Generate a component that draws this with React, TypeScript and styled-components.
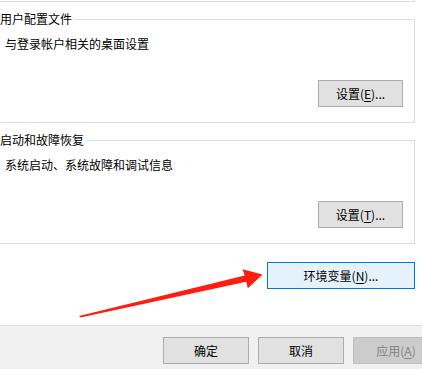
import React from "react";
import styled, { createGlobalStyle } from "styled-components";

const Global = createGlobalStyle`
  html, body { margin: 0; padding: 0; background: #ffffff; }
  body { width: 422px; height: 369px; overflow: hidden; }
  * { box-sizing: border-box; }
`;

const Page = styled.div`
  position: relative;
  width: 422px;
  height: 369px;
  overflow: hidden;
  display: flex;
  flex-direction: column;
  font-family: "Noto Sans CJK SC", "Microsoft YaHei", sans-serif;
  font-size: 12px;
  color: #000000;
`;

const Content = styled.div`
  flex: 0 0 325px;
  background: #ffffff;
  display: flex;
  flex-direction: column;
`;

const PrevBox = styled.div`
  margin-left: -10px;
  width: 425px;
  height: 2px;
  border-right: 1px solid #dcdcdc;
  border-bottom: 1px solid #dcdcdc;
`;

const Group = styled.section<{ $top: number }>`
  margin-top: ${(p) => p.$top}px;
  width: 415px;
  display: flex;
  flex-direction: column;
`;

const GroupHeader = styled.div`
  display: flex;
  height: 16px;
`;

const GroupLabel = styled.span`
  line-height: 16px;
  white-space: nowrap;
`;

const HeaderLine = styled.div`
  flex: 1;
  margin-left: 2px;
  margin-top: 8px;
  border-top: 1px solid #dcdcdc;
  border-right: 1px solid #dcdcdc;
`;

const GroupBody = styled.div`
  margin-left: -10px;
  border-left: 1px solid #dcdcdc;
  border-right: 1px solid #dcdcdc;
  border-bottom: 1px solid #dcdcdc;
  padding: 9px 11px 15px 14px;
  display: flex;
  flex-direction: column;
`;

const Description = styled.div`
  line-height: 16px;
  white-space: nowrap;
`;

const ButtonRow = styled.div<{ $top: number }>`
  display: flex;
  justify-content: flex-end;
  margin-top: ${(p) => p.$top}px;
`;

const Button = styled.button<{ $width: number; $variant?: "default" | "focus" | "disabled" }>`
  width: ${(p) => p.$width}px;
  height: 27px;
  flex: 0 0 auto;
  padding: 0;
  margin: 0;
  font-family: inherit;
  font-size: 12px;
  line-height: 16px;
  color: ${(p) => (p.$variant === "disabled" ? "#838383" : "#000000")};
  background: ${(p) =>
    p.$variant === "focus" ? "#e5f1fb" : p.$variant === "disabled" ? "#cccccc" : "#e1e1e1"};
  border: 1px solid
    ${(p) =>
      p.$variant === "focus" ? "#0078d7" : p.$variant === "disabled" ? "#bfbfbf" : "#adadad"};
  border-radius: 0;
  white-space: nowrap;
`;

const Key = styled.u`
  text-decoration: underline;
  text-underline-offset: 2px;
`;

const EnvRow = styled.div`
  width: 415px;
  display: flex;
  justify-content: flex-end;
  margin-top: 18px;
`;

const Footer = styled.div`
  flex: 1;
  background: #f0f0f0;
  border-top: 1px solid #dfdfdf;
  display: flex;
  gap: 9px;
  padding: 11px 0 0 163px;
  overflow: hidden;
`;

const Overlay = styled.svg`
  position: absolute;
  left: 0;
  top: 0;
  pointer-events: none;
`;

export default function App() {
  return (
    <Page>
      <Global />
      <Content>
        <PrevBox />
        <Group $top={9}>
          <GroupHeader>
            <GroupLabel>用户配置文件</GroupLabel>
            <HeaderLine />
          </GroupHeader>
          <GroupBody>
            <Description>与登录帐户相关的桌面设置</Description>
            <ButtonRow $top={28}>
              <Button $width={85}>
                设置(<Key>E</Key>)...
              </Button>
            </ButtonRow>
          </GroupBody>
        </Group>
        <Group $top={9}>
          <GroupHeader>
            <GroupLabel>启动和故障恢复</GroupLabel>
            <HeaderLine />
          </GroupHeader>
          <GroupBody>
            <Description>系统启动、系统故障和调试信息</Description>
            <ButtonRow $top={28}>
              <Button $width={85}>
                设置(<Key>T</Key>)...
              </Button>
            </ButtonRow>
          </GroupBody>
        </Group>
        <EnvRow>
          <Button $width={148} $variant="focus">
            环境变量(<Key>N</Key>)...
          </Button>
        </EnvRow>
      </Content>
      <Footer>
        <Button $width={86}>确定</Button>
        <Button $width={86}>取消</Button>
        <Button $width={86} $variant="disabled">
          应用(<Key>A</Key>)
        </Button>
      </Footer>
      <Overlay width={422} height={369} viewBox="0 0 422 369">
        <polygon
          points="79,316 244.7,275.6 242.5,269.3 262.5,274.5 247.8,288.2 246.2,281.8 80.5,317.6"
          fill="#ff1d12"
        />
      </Overlay>
    </Page>
  );
}
